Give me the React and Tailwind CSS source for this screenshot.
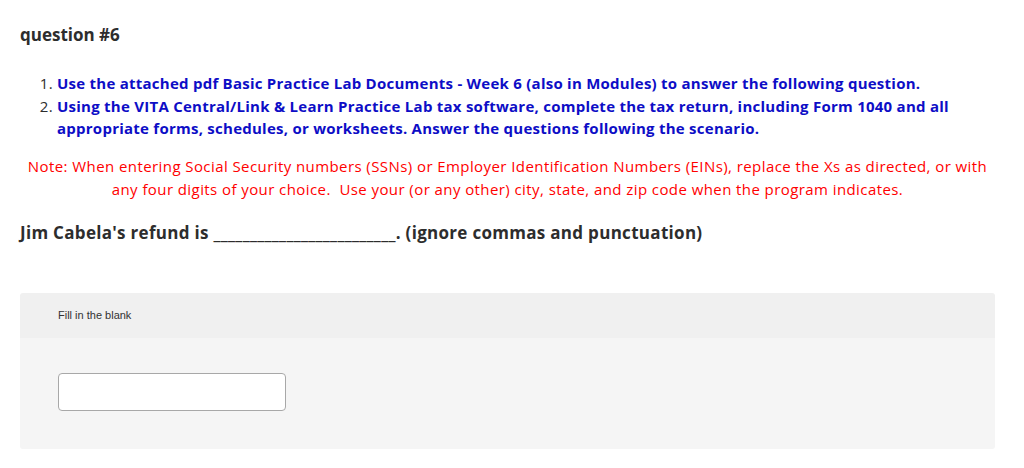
export default function App() {
  const font = { fontFamily: '"Open Sans", "Lato", sans-serif' };
  return (
    <div className="w-[1024px] h-[468px] bg-white overflow-hidden" style={font}>
      <div className="pl-5 pr-[29px] pt-[23px]">
        <h1 className="text-[17px] leading-[24px] font-bold text-[#2d2d2d]">question #6</h1>
        <ol className="mt-[25px] pl-[37px] list-decimal text-[15px] leading-[22.5px] font-bold tracking-[0.25px] text-[#0d0dc6] marker:text-[#2d2d2d] marker:font-normal">
          <li>Use the attached pdf Basic Practice Lab Documents - Week 6 (also in Modules) to answer the following question.</li>
          <li>Using the VITA Central/Link &amp; Learn Practice Lab tax software, complete the tax return, including Form 1040 and all appropriate forms, schedules, or worksheets. Answer the questions following the scenario.</li>
        </ol>
        <p className="mt-[15px] text-center text-[15px] leading-[23px] tracking-[0.42px] text-[#ff0000] px-[2px]">
          Note: When entering Social Security numbers (SSNs) or Employer Identification Numbers (EINs), replace the Xs as directed, or with any four digits of your choice.&nbsp; Use your (or any other) city, state, and zip code when the program indicates.
        </p>
        <p className="mt-[20px] text-[17px] leading-[24px] font-bold tracking-[0.3px] text-[#2d2d2d]">
          Jim Cabela's refund is _________________________. (ignore commas and punctuation)
        </p>
        <div className="mt-[48px] rounded-[3px] overflow-hidden">
          <div className="h-[45px] bg-[#f0f0f0] pl-[38px] flex items-center">
            <span className="text-[11px] text-[#333]" style={{ fontFamily: '"Liberation Sans", Arial, sans-serif' }}>Fill in the blank</span>
          </div>
          <div className="h-[111px] bg-[#f5f5f5] pl-[38px] pt-[35px]">
            <input type="text" className="block w-[228px] h-[38px] bg-white border border-[#a8a8a8] rounded-[4px]" />
          </div>
        </div>
      </div>
    </div>
  );
}
